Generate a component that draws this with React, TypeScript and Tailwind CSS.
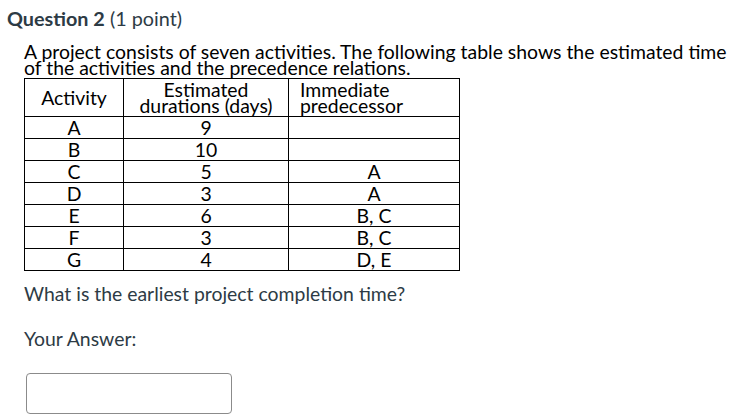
import React from "react";

const rows: [string, string, string][] = [
  ["A", "9", ""],
  ["B", "10", ""],
  ["C", "5", "A"],
  ["D", "3", "A"],
  ["E", "6", "B, C"],
  ["F", "3", "B, C"],
  ["G", "4", "D, E"],
];

export default function App() {
  return (
    <div
      className="w-[751px] h-[420px] bg-white text-[#2d3b45] overflow-hidden"
      style={{ fontFamily: "Lato, 'Liberation Sans', sans-serif" }}
    >
      <div className="pl-[7px] pt-[6px] text-[19.8px] leading-[24px]">
        <span className="font-bold">Question 2</span> <span>(1 point)</span>
      </div>
      <div className="pl-[24px] pt-[14px]">
        <p className="text-[19.4px] leading-[16px] text-black whitespace-nowrap">
          A project consists of seven activities. The following table shows the estimated time
          <br />
          of the activities and the precedence relations.
        </p>
        <table className="mt-[2px] border-collapse text-[19.4px] text-black">
          <thead>
            <tr className="h-[38px]">
              <th className="w-[99px] border border-black font-normal leading-[16px] p-0 text-center">
                Activity
              </th>
              <th className="w-[165px] border border-black font-normal leading-[16px] p-0 text-center">
                Estimated
                <br />
                durations (days)
              </th>
              <th className="w-[171px] border border-black font-normal leading-[16px] p-0 pl-[11px] text-left">
                Immediate
                <br />
                predecessor
              </th>
            </tr>
          </thead>
          <tbody>
            {rows.map(([a, d, p]) => (
              <tr key={a} className="h-[22px]">
                <td className="border border-black p-0 text-center leading-[20px]">{a}</td>
                <td className="border border-black p-0 text-center leading-[20px]">{d}</td>
                <td className="border border-black p-0 text-center leading-[20px]">{p}</td>
              </tr>
            ))}
          </tbody>
        </table>
        <p className="mt-[11px] text-[19.4px] leading-[24px]">What is the earliest project completion time?</p>
        <p className="mt-[21px] text-[19.4px] leading-[24px]">Your Answer:</p>
        <div className="mt-[22px] ml-[2px] w-[206px] h-[41px] rounded-[4px] border border-[#8b8b8b] bg-white" />
      </div>
    </div>
  );
}
